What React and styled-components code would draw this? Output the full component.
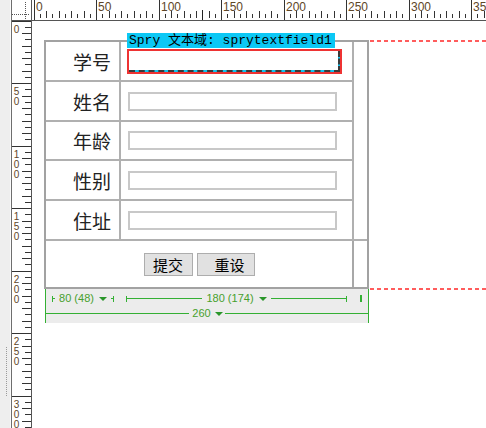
import React from "react";
import styled, { createGlobalStyle } from "styled-components";

const GlobalStyle = createGlobalStyle`
  html, body {
    margin: 0;
    padding: 0;
    background: #fff;
  }
  body {
    font-family: "Noto Sans CJK SC", "Liberation Sans", sans-serif;
  }
`;

const GREEN = "#34b034";

const Workspace = styled.div`
  display: grid;
  grid-template-columns: 11px 21px 1fr;
  grid-template-rows: 21px 1fr;
  width: 486px;
  height: 428px;
  overflow: hidden;
  background: #fff;
`;

const SideStrip = styled.div`
  grid-row: 1 / span 2;
  display: flex;
  flex-direction: column;
  background: #eeeeee;
  border-right: 1px solid #fbfbfb;
`;

const Grip = styled.div`
  margin: 347px 0 0 6px;
  width: 1px;
  height: 50px;
  background: repeating-linear-gradient(to bottom, #9a9a9a 0 1px, transparent 1px 2px);
`;

const RulerBox = styled.div`
  border-left: 1px solid #6e6e6e;
  background: #fff;
  overflow: hidden;

  svg {
    display: block;
  }
`;

const TopRulerBox = styled.div`
  background: #fff;
  overflow: hidden;

  svg {
    display: block;
  }
`;

const Canvas = styled.div`
  display: flex;
  align-items: flex-start;
  padding: 19px 0 0 12px;
  background: #fff;
`;

const TableColumn = styled.div`
  display: flex;
  flex-direction: column;
  flex: none;
  width: 325px;
`;

const FormGrid = styled.div`
  display: grid;
  grid-template-columns: 75px 233px 1fr;
  grid-template-rows: 40px 40px 39px 40px 40px 46px;
  box-sizing: border-box;
  width: 325px;
  border: 2px solid #a2a2a2;
`;

const LabelCell = styled.div`
  display: flex;
  align-items: center;
  justify-content: flex-end;
  padding-right: 8px;
  border-right: 2px solid #b0b0b0;
  border-bottom: 2px solid #b0b0b0;
  font-size: 19px;
  color: #222;
`;

const FieldCell = styled.div`
  position: relative;
  display: flex;
  align-items: center;
  padding-left: 7px;
  border-right: 2px solid #b0b0b0;
  border-bottom: 2px solid #b0b0b0;
`;

const SpacerCell = styled.div`
  grid-column: 3;
  grid-row: 1 / span 5;
  border-bottom: 2px solid #b0b0b0;
`;

const ButtonCell = styled.div`
  grid-column: 1 / span 2;
  display: flex;
  align-items: center;
  justify-content: center;
  gap: 4px;
  border-right: 2px solid #a8a8a8;
`;

const TextInput = styled.input`
  display: block;
  box-sizing: border-box;
  width: 209px;
  height: 19px;
  margin: 0;
  padding: 0;
  border: 2px solid #c8c8c8;
  background: #fff;
  outline: none;
`;

const SpryTab = styled.div`
  position: absolute;
  left: 6px;
  top: -9px;
  width: 208px;
  height: 15px;
  padding-left: 2px;
  box-sizing: border-box;
  background: #0cc8f5;
  color: #000;
  font-family: "Liberation Mono", "Noto Sans CJK SC", monospace;
  font-size: 13px;
  line-height: 15px;
  white-space: nowrap;
  overflow: hidden;
`;

const SelectedBox = styled.div`
  box-sizing: border-box;
  width: 215px;
  height: 25px;
  margin-left: -1px;
  border: 2px solid #ee3333;
`;

const SpryInput = styled.input`
  display: block;
  box-sizing: border-box;
  width: 100%;
  height: 100%;
  margin: 0;
  padding: 0;
  border: 0;
  border-right: 2px dashed #3a3a3a;
  border-bottom: 2px dashed #3a3a3a;
  background: linear-gradient(#fff, #fff) padding-box, #14c4f0 border-box;
  outline: none;
`;

const FormButton = styled.button`
  box-sizing: border-box;
  width: ${(p) => p.$width}px;
  height: 23px;
  margin: 0;
  padding: 0 0 0 ${(p) => p.$indent || 0}px;
  border: 1px solid #adadad;
  border-radius: 0;
  background: #e1e1e1;
  color: #000;
  font-family: "Noto Sans CJK SC", sans-serif;
  font-size: 15px;
  line-height: 21px;
`;

const WidthBar = styled.div`
  display: flex;
  flex-direction: column;
  box-sizing: border-box;
  width: 324px;
  height: 34px;
  margin-left: 1px;
  padding-top: 2px;
  border-left: 1px solid ${GREEN};
  border-right: 1px solid ${GREEN};
  background: #ececec;
`;

const BarRow = styled.div`
  display: flex;
  align-items: center;
  height: 15px;
`;

const Segment = styled.div`
  display: flex;
  align-items: center;
  justify-content: ${(p) => (p.$center ? "center" : "flex-start")};
  box-sizing: border-box;
  width: ${(p) => p.$width}px;
  padding: 0 ${(p) => p.$right || 0}px 0 ${(p) => p.$left || 0}px;
  flex: none;
`;

const EndTick = styled.span`
  width: 1px;
  height: 6px;
  background: ${GREEN};
  flex: none;
`;

const Rule = styled.span`
  flex: 1;
  min-width: 2px;
  height: 1px;
  background: ${GREEN};
`;

const Measure = styled.span`
  margin: 0 ${(p) => p.$gap}px 0 ${(p) => p.$gap}px;
  color: #47a02c;
  font-family: "Liberation Sans", sans-serif;
  font-size: 11px;
  line-height: 1;
  white-space: nowrap;
`;

const Caret = styled.span`
  width: 0;
  height: 0;
  margin: 0 ${(p) => p.$after}px 0 1px;
  border-left: 4px solid transparent;
  border-right: 4px solid transparent;
  border-top: 4px solid #2a962a;
  flex: none;
`;

const Marker = styled.span`
  width: 2px;
  height: 7px;
  background: ${GREEN};
`;

const Guide = styled.div`
  flex: 1;
  height: 250px;
  margin-left: 1px;
  background-image: repeating-linear-gradient(90deg, #ff5c5c 0 4px, transparent 4px 7px),
    repeating-linear-gradient(90deg, #ff5c5c 0 4px, transparent 4px 7px);
  background-size: 100% 2px, 100% 2px;
  background-position: 0 0, 0 100%;
  background-repeat: no-repeat;
`;

function Corner() {
  return (
    <svg width="20" height="21">
      <g stroke="#555" strokeDasharray="1 1">
        <line x1="0" y1="14.5" x2="18" y2="14.5" />
        <line x1="13.5" y1="2" x2="13.5" y2="19" />
      </g>
      <line x1="19.5" y1="0" x2="19.5" y2="21" stroke="#555" />
      <line x1="0" y1="20.5" x2="20" y2="20.5" stroke="#555" />
    </svg>
  );
}

function TopRuler() {
  const marks = [];
  for (let i = 0; 2 + i * 6.25 < 454; i++) {
    const x = Math.floor(2 + i * 6.25) + 0.5;
    if (i % 10 === 0) {
      marks.push(<line key={i} x1={x} y1={0} x2={x} y2={20} />);
      marks.push(
        <text key={"t" + i} x={x + 1.5} y={11} stroke="none">
          {i * 5}
        </text>
      );
    } else {
      marks.push(<line key={i} x1={x} y1={i % 2 ? 14 : 11} x2={x} y2={18} />);
    }
  }
  return (
    <svg width="454" height="21">
      <g stroke="#333" fill="#5e4628" fontFamily="Liberation Sans, sans-serif" fontSize="12">
        {marks}
        <line x1="170.5" y1="10" x2="170.5" y2="20" stroke="#222" />
        <line x1="0" y1="20.5" x2="454" y2="20.5" stroke="#555" />
      </g>
    </svg>
  );
}

function SideRuler() {
  const marks = [];
  for (let i = 0; i * 6.25 < 407; i++) {
    const y = Math.floor(i * 6.25) + 0.5;
    if (i % 10 === 0) {
      marks.push(<line key={i} x1={0} y1={y} x2={19} y2={y} />);
      String(i * 5)
        .split("")
        .forEach((d, n) => {
          marks.push(
            <text key={`d${i}-${n}`} x={4.5} y={y + 11 + n * 10} stroke="none" textAnchor="middle">
              {d}
            </text>
          );
        });
    } else {
      marks.push(<line key={i} x1={i % 2 ? 13 : 10} y1={y} x2={19} y2={y} />);
    }
  }
  return (
    <svg width="20" height="407">
      <g stroke="#333" fill="#5e4628" fontFamily="Liberation Sans, sans-serif" fontSize="10">
        {marks}
        <line x1="19.5" y1="0" x2="19.5" y2="407" stroke="#555" />
      </g>
    </svg>
  );
}

const fields = ["姓名", "年龄", "性别", "住址"];

export default function App() {
  return (
    <>
      <GlobalStyle />
      <Workspace>
        <SideStrip>
          <Grip />
        </SideStrip>
        <RulerBox>
          <Corner />
        </RulerBox>
        <TopRulerBox>
          <TopRuler />
        </TopRulerBox>
        <RulerBox>
          <SideRuler />
        </RulerBox>
        <Canvas>
          <TableColumn>
            <FormGrid>
              <LabelCell>学号</LabelCell>
              <FieldCell>
                <SpryTab>Spry 文本域: sprytextfield1</SpryTab>
                <SelectedBox>
                  <SpryInput readOnly />
                </SelectedBox>
              </FieldCell>
              <SpacerCell />
              {fields.map((f) => (
                <React.Fragment key={f}>
                  <LabelCell>{f}</LabelCell>
                  <FieldCell>
                    <TextInput readOnly />
                  </FieldCell>
                </React.Fragment>
              ))}
              <ButtonCell>
                <FormButton $width={49}>提交</FormButton>
                <FormButton $width={58} $indent={8}>重设</FormButton>
              </ButtonCell>
              <div />
            </FormGrid>
            <WidthBar>
              <BarRow>
                <Segment $width={75} $left={6} $right={7}>
                  <EndTick />
                  <Rule />
                  <Measure $gap={4}>80 (48)</Measure>
                  <Caret $after={4} />
                  <Rule />
                  <EndTick />
                </Segment>
                <Segment $width={233} $left={5} $right={7}>
                  <EndTick />
                  <Rule />
                  <Measure $gap={4}>180 (174)</Measure>
                  <Caret $after={4} />
                  <Rule />
                  <EndTick />
                </Segment>
                <Segment $width={14} $center>
                  <Marker />
                </Segment>
              </BarRow>
              <BarRow>
                <Rule />
                <Measure $gap={3}>260</Measure>
                <Caret $after={2} />
                <Rule />
              </BarRow>
            </WidthBar>
          </TableColumn>
          <Guide />
        </Canvas>
      </Workspace>
    </>
  );
}
